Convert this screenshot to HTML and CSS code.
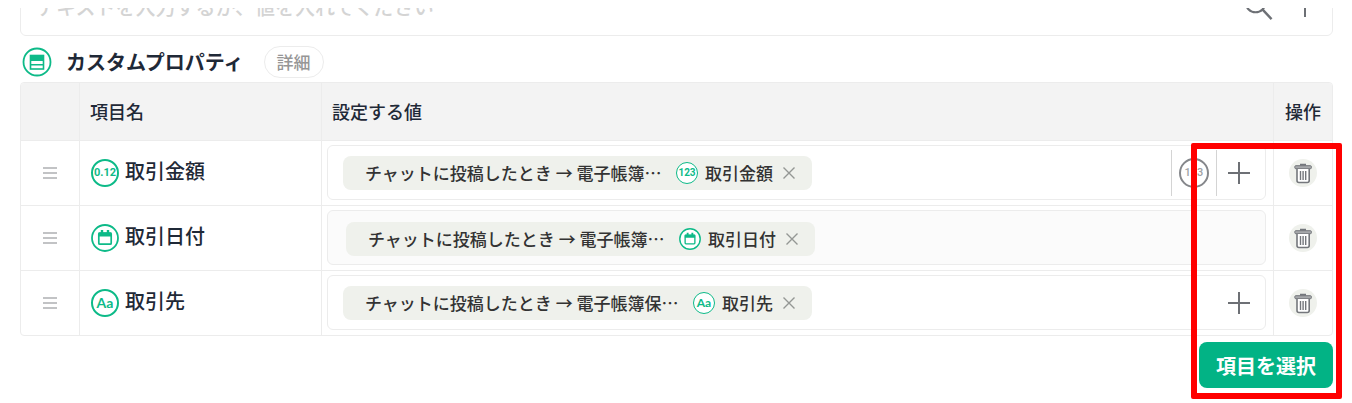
FILE: index.html
```html
<!DOCTYPE html>
<html lang="ja">
<head>
    <meta charset="UTF-8">
    <meta name="viewport" content="width=device-width, initial-scale=1.0">
    <title>カスタムプロパティ</title>
    <link rel="stylesheet" href="styles.css">
</head>
<body>
    <!-- Shared icons -->
    <svg class="icon-defs" aria-hidden="true">
        <symbol id="icon-plus" viewBox="0 0 24 24">
            <path d="M12 1v22M1 12h22" fill="none" stroke="#6d7075" stroke-width="2"/>
        </symbol>
        <symbol id="icon-close" viewBox="0 0 12 12">
            <path d="M0.5 0.5l11 11M11.5 0.5l-11 11" fill="none" stroke="#949794" stroke-width="1.4"/>
        </symbol>
        <symbol id="icon-menu" viewBox="0 0 14 12">
            <path d="M0 1h14M0 6h14M0 11h14" fill="none" stroke="#85878b" stroke-width="1.2"/>
        </symbol>
        <symbol id="icon-trash" viewBox="0 0 28 28">
            <path d="M11 5.8h6" stroke="#74777c" stroke-width="2"/>
            <rect x="5.8" y="6.7" width="16.6" height="3" rx="1" fill="#a6a8ab" stroke="#74777c" stroke-width="1"/>
            <path d="M8 10v11.5a2 2 0 0 0 2 2h8.2a2 2 0 0 0 2-2V10" fill="#fff" stroke="#74777c" stroke-width="1.6"/>
            <path d="M11.5 12v9M14.1 12v9M16.7 12v9" stroke="#74777c" stroke-width="1.4"/>
        </symbol>
        <symbol id="icon-date" viewBox="0 0 28 28">
            <circle cx="14" cy="14" r="13" fill="#fff" stroke="#0dba88" stroke-width="1.8"/>
            <rect x="7.8" y="9" width="12.4" height="11.2" rx="1" fill="none" stroke="#0dba88" stroke-width="1.7"/>
            <path d="M7.5 8.5h13v4h-13z" fill="#0dba88"/>
            <path d="M11 6v4M17 6v4" stroke="#0dba88" stroke-width="2.4"/>
        </symbol>
    </svg>

    <main class="container">
        <div class="search-wrap">
            <div class="search-box">
                <input type="text" class="search-input" aria-label="値" placeholder="テキストを入力するか、値を入れてください">
                <button type="button" class="icon-btn" aria-label="検索">
                    <svg width="32" height="32" viewBox="0 0 28 28"><circle cx="11" cy="11" r="8.5" fill="none" stroke="#6d7075" stroke-width="1.9"/><path d="M17 17l8 8.5" stroke="#6d7075" stroke-width="2.1"/></svg>
                </button>
                <button type="button" class="icon-btn" aria-label="追加">
                    <svg width="24" height="24"><use href="#icon-plus"/></svg>
                </button>
            </div>
        </div>

        <div class="section-head">
            <svg width="30" height="30" viewBox="0 0 30 30" aria-hidden="true">
                <circle cx="15" cy="15" r="13.5" fill="#fff" stroke="#0dba88" stroke-width="1.8"/>
                <rect x="8.5" y="8.5" width="13" height="13.5" fill="#fff" stroke="#0dba88" stroke-width="1.6"/>
                <path d="M8 8h14v6H8zM8 17h14v1.5H8z" fill="#0dba88"/>
            </svg>
            <h2>カスタムプロパティ</h2>
            <button type="button" class="detail-btn">詳細</button>
        </div>

        <table class="props">
            <thead>
                <tr>
                    <th class="col-drag" aria-label="並べ替え"></th>
                    <th class="col-name">項目名</th>
                    <th>設定する値</th>
                    <th class="col-action">操作</th>
                </tr>
            </thead>
            <tbody>
                <tr>
                    <td class="drag"><svg width="14" height="12"><use href="#icon-menu"/></svg></td>
                    <td class="name">
                        <div class="name-inner"><span class="badge">0.12</span><span class="label">取引金額</span></div>
                    </td>
                    <td class="value">
                        <div class="field">
                            <div class="chip">
                                <span class="source">チャットに投稿したとき → 電子帳簿…</span>
                                <span class="badge small">123</span>
                                <span>取引金額</span>
                                <button type="button" class="chip-close" aria-label="削除"><svg width="12" height="12"><use href="#icon-close"/></svg></button>
                            </div>
                            <div class="tools">
                                <button type="button" class="tool divided" aria-label="数値"><span class="badge muted">123</span></button>
                                <button type="button" class="tool divided" aria-label="追加"><svg width="24" height="24"><use href="#icon-plus"/></svg></button>
                            </div>
                        </div>
                    </td>
                    <td class="action"><button type="button" class="trash-btn" aria-label="行を削除"><svg width="28" height="28"><use href="#icon-trash"/></svg></button></td>
                </tr>
                <tr>
                    <td class="drag"><svg width="14" height="12"><use href="#icon-menu"/></svg></td>
                    <td class="name">
                        <div class="name-inner"><svg width="28" height="28"><use href="#icon-date"/></svg><span class="label">取引日付</span></div>
                    </td>
                    <td class="value">
                        <div class="field readonly">
                            <div class="chip">
                                <span class="source">チャットに投稿したとき → 電子帳簿…</span>
                                <svg class="chip-icon" width="22" height="22"><use href="#icon-date"/></svg>
                                <span>取引日付</span>
                                <button type="button" class="chip-close" aria-label="削除"><svg width="12" height="12"><use href="#icon-close"/></svg></button>
                            </div>
                        </div>
                    </td>
                    <td class="action"><button type="button" class="trash-btn" aria-label="行を削除"><svg width="28" height="28"><use href="#icon-trash"/></svg></button></td>
                </tr>
                <tr>
                    <td class="drag"><svg width="14" height="12"><use href="#icon-menu"/></svg></td>
                    <td class="name">
                        <div class="name-inner"><span class="badge letters">Aa</span><span class="label">取引先</span></div>
                    </td>
                    <td class="value">
                        <div class="field">
                            <div class="chip">
                                <span class="source">チャットに投稿したとき → 電子帳簿保…</span>
                                <span class="badge small letters">Aa</span>
                                <span>取引先</span>
                                <button type="button" class="chip-close" aria-label="削除"><svg width="12" height="12"><use href="#icon-close"/></svg></button>
                            </div>
                            <div class="tools">
                                <button type="button" class="tool" aria-label="追加"><svg width="24" height="24"><use href="#icon-plus"/></svg></button>
                            </div>
                        </div>
                    </td>
                    <td class="action"><button type="button" class="trash-btn" aria-label="行を削除"><svg width="28" height="28"><use href="#icon-trash"/></svg></button></td>
                </tr>
            </tbody>
        </table>

        <div class="footer">
            <button type="button" class="select-btn">項目を選択</button>
        </div>
    </main>

    <div class="highlight"></div>
</body>
</html>
```
FILE: styles.css
```css
* {
    box-sizing: border-box;
}
body {
    margin: 0;
    position: relative;
    font-family: "Noto Sans CJK JP", sans-serif;
    font-weight: 500;
    color: #1f2937;
    background-color: #fff;
}
button {
    font: inherit;
    color: inherit;
    border: none;
    background: none;
    padding: 0;
    cursor: pointer;
}
svg {
    display: block;
    flex-shrink: 0;
}
.icon-defs {
    position: absolute;
    width: 0;
    height: 0;
}
.container {
    padding: 8px 19px 14px 20px;
}

/* Round type badges */
.badge {
    display: flex;
    align-items: center;
    justify-content: center;
    flex-shrink: 0;
    width: 28px;
    height: 28px;
    border: 2px solid #0dba88;
    border-radius: 50%;
    background-color: #fff;
    color: #0dba88;
    font-family: Roboto, sans-serif;
    font-size: 11px;
    font-weight: 700;
    line-height: 16px;
}
.badge.letters {
    font-family: Lato, sans-serif;
    font-size: 14px;
}
.badge.small {
    width: 22px;
    height: 22px;
    border-width: 1px;
    font-size: 10px;
}
.badge.small.letters {
    font-size: 12px;
}
.badge.muted {
    width: 30px;
    height: 30px;
    border-color: #85878b;
    color: #a0a2a5;
    font-weight: 500;
}

/* Scrolled text box */
.search-wrap {
    display: flex;
    align-items: flex-end;
    height: 28px;
    overflow: hidden;
}
.search-box {
    display: flex;
    align-items: center;
    gap: 18px;
    flex: 1;
    height: 60px;
    padding: 0 15px;
    border: 1px solid #ececec;
    border-radius: 6px;
}
.search-input {
    flex: 1;
    min-width: 0;
    height: 40px;
    padding: 0;
    border: none;
    outline: none;
    background: none;
    font: inherit;
    font-size: 20px;
}
.search-input::placeholder {
    color: #d4d4d4;
}

/* Section heading */
.section-head {
    display: flex;
    align-items: center;
    height: 46px;
    padding: 6px 2px 0;
}
.section-head h2 {
    margin: 0 20px 0 14px;
    font-size: 20px;
    font-weight: 700;
    line-height: 30px;
}
.detail-btn {
    height: 32px;
    padding: 0 12px;
    border: 1px solid #ececec;
    border-radius: 16px;
    font-size: 17px;
    line-height: 30px;
    color: #969696;
}

/* Table */
.props {
    width: 100%;
    table-layout: fixed;
    border: 1px solid #ececec;
    border-radius: 4px;
    border-spacing: 0;
    overflow: hidden;
}
.props th {
    height: 58px;
    padding: 0 10px 2px;
    background-color: #f3f3f3;
    font-size: 18px;
    font-weight: 500;
    text-align: left;
}
.props th,
.props td {
    border-right: 1px solid #ececec;
    border-bottom: 1px solid #ececec;
}
.props th:last-child,
.props td:last-child {
    border-right: none;
}
.props tbody tr:last-child td {
    border-bottom: none;
}
.props td {
    padding: 0;
}
.props .col-drag {
    width: 59px;
}
.props .col-name {
    width: 242px;
}
.props .col-action {
    width: 58px;
    text-align: center;
    padding: 0 0 2px;
}
.drag svg,
.trash-btn {
    margin: 0 auto;
}
.name-inner {
    display: flex;
    align-items: center;
    gap: 6px;
    padding-left: 11px;
    font-size: 20px;
    line-height: 24px;
}
.label {
    padding-bottom: 4px;
}
.props .value {
    padding: 4px 7px 5px 5px;
}
.field {
    display: flex;
    align-items: center;
    justify-content: space-between;
    height: 55px;
    padding-left: 15px;
    border: 1px solid #ececec;
    border-radius: 6px;
}
.field.readonly {
    padding: 2px 0 0 18px;
    background-color: #fbfbfb;
}
.chip {
    display: flex;
    align-items: center;
    width: 469px;
    height: 34px;
    padding: 0 17px 0 22px;
    border-radius: 8px;
    background-color: #eff1ec;
    color: #333;
    font-size: 17px;
    line-height: 34px;
    white-space: nowrap;
}
.source {
    flex: 1;
}
.chip .badge,
.chip-icon {
    margin-right: 7px;
}
.chip-close {
    margin-left: 10px;
}
.tools {
    display: flex;
    padding-right: 4px;
}
.tool {
    display: flex;
    align-items: center;
    justify-content: center;
    width: 45px;
    height: 46px;
}
.tool.divided {
    border-left: 1px solid #d4d4d4;
}
.trash-btn {
    display: block;
    width: 28px;
    height: 28px;
    border-radius: 50%;
    background-color: #eff1ec;
}

.footer {
    display: flex;
    justify-content: flex-end;
    padding-top: 6px;
}
.select-btn {
    height: 46px;
    padding: 0 17px;
    border-radius: 8px;
    background-color: #02b385;
    color: #fff;
    font-size: 20px;
    font-weight: 700;
    line-height: 48px;
}

/* Callout around the row actions */
.highlight {
    position: absolute;
    top: 143px;
    right: 10px;
    width: 151px;
    height: 256px;
    border: 6px solid #f00;
    border-radius: 2px;
    pointer-events: none;
}
```
